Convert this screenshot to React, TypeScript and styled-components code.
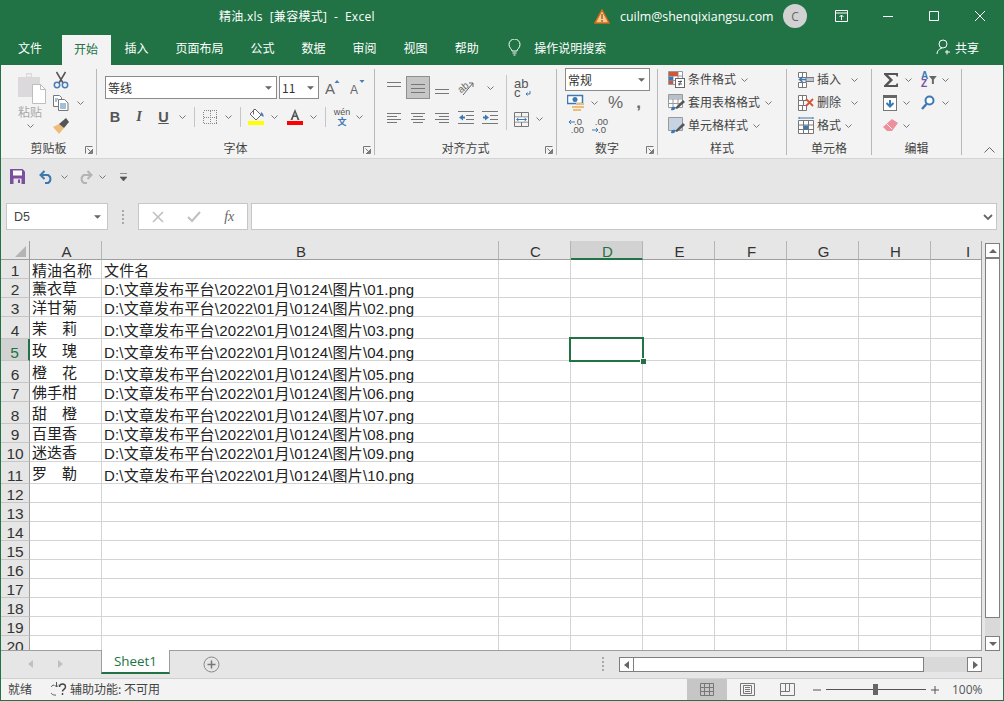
import React, { FunctionComponent, ReactNode } from 'react';
import styled, { createGlobalStyle } from 'styled-components';

const GREEN = '#217346';
const UI_FONT = '"Noto Sans CJK SC", "Noto Sans", sans-serif';
const LATIN_FONT = '"Open Sans", "Noto Sans CJK SC", sans-serif';
const SHEET_FONT = '"Liberation Sans", "Noto Sans CJK SC", sans-serif';

const GlobalStyle = createGlobalStyle`
  html, body { margin: 0; padding: 0; background: #e6e6e6; }
  * { box-sizing: border-box; }
`;

const Window = styled.div`
  width: 1004px;
  height: 701px;
  border: 1px solid ${GREEN};
  background: #e6e6e6;
  display: flex;
  flex-direction: column;
  overflow: hidden;
  font-family: ${UI_FONT};
  font-size: 12px;
  color: #444;
`;

/* title bar */
const TitleBar = styled.header`
  height: 32px;
  flex: none;
  background: ${GREEN};
  color: #fff;
  display: flex;
  align-items: center;
  padding: 0 0 2px 218px;
`;
const DocTitle = styled.div`
  width: 375px;
  font-family: ${LATIN_FONT};
  font-size: 12px;
  letter-spacing: 0.28px;
  white-space: pre;
`;
const Account = styled.div`
  font-family: ${LATIN_FONT};
  font-size: 12.4px;
  margin-left: 10px;
  width: 163px;
`;
const Avatar = styled.div`
  width: 24px;
  height: 24px;
  border-radius: 50%;
  background: #d2d2d2;
  color: #666;
  font-family: ${LATIN_FONT};
  font-size: 12px;
  display: flex;
  align-items: center;
  justify-content: center;
`;
const WinButton = styled.div<{ $w: number; $first?: boolean }>`
  width: ${(p) => p.$w}px;
  margin-left: ${(p) => (p.$first ? 12 : 0)}px;
  display: flex;
  justify-content: center;
`;

/* tabs */
const TabRow = styled.nav`
  height: 32px;
  flex: none;
  background: ${GREEN};
  display: flex;
  align-items: stretch;
  padding-left: 4px;
  color: #fff;
`;
const Tab = styled.div<{ $active?: boolean; $file?: boolean }>`
  padding: ${(p) => (p.$file ? '0 20px 4px 13px' : p.$active ? '0 13px 3px 12px' : '0 13.5px 4px')};
  display: flex;
  align-items: center;
  background: ${(p) => (p.$active ? '#f3f3f3' : 'transparent')};
  color: ${(p) => (p.$active ? GREEN : '#fff')};
  margin-top: ${(p) => (p.$active ? '2px' : '0')};
`;
const SearchHint = styled.div`
  display: flex;
  align-items: center;
  gap: 13px;
  margin-left: 16px;
  padding-bottom: 3px;
`;
const ShareBox = styled.div`
  margin-left: auto;
  margin-right: 24px;
  display: flex;
  align-items: center;
  gap: 3px;
  padding-bottom: 4px;
`;

/* ribbon */
const Ribbon = styled.section`
  height: 94px;
  flex: none;
  background: #f3f3f3;
  border-bottom: 1px solid #d4d4d4;
  display: flex;
  align-items: flex-start;
`;
const GroupBox = styled.div<{ $w: number }>`
  position: relative;
  width: ${(p) => p.$w}px;
  height: 86px;
  margin-top: 4px;
  flex: none;
  border-right: 1px solid #b8b8b8;
  display: flex;
  flex-direction: column;
`;
const GroupBody = styled.div<{ $left: number }>`
  height: 70px;
  padding-left: ${(p) => p.$left}px;
  display: flex;
  align-items: flex-start;
`;
const GroupLabel = styled.div`
  height: 16px;
  line-height: 18px;
  text-align: center;
  color: #444;
`;
const Launcher = styled.div`
  position: absolute;
  right: 3px;
  bottom: 1px;
  display: flex;
`;
const Group: FunctionComponent<{
  w: number;
  left: number;
  label: string;
  launcher?: boolean;
  children: ReactNode;
}> = ({ w, left, label, launcher, children }) => (
  <GroupBox $w={w}>
    <GroupBody $left={left}>{children}</GroupBody>
    <GroupLabel>{label}</GroupLabel>
    {launcher && (
      <Launcher>
        <LauncherIcon />
      </Launcher>
    )}
  </GroupBox>
);
const CollapseBtn = styled.div`
  margin-left: 22px;
  align-self: flex-end;
  margin-bottom: 2px;
`;

const Stack = styled.div<{ $top?: number; $left?: number; $w?: number }>`
  display: flex;
  flex-direction: column;
  margin-top: ${(p) => p.$top ?? 0}px;
  margin-left: ${(p) => p.$left ?? 0}px;
  ${(p) => (p.$w ? `width: ${p.$w}px;` : '')}
`;
const ToolRow = styled.div<{ $h?: number; $gap?: number; $top?: number; $left?: number }>`
  height: ${(p) => p.$h ?? 23}px;
  display: flex;
  align-items: center;
  gap: ${(p) => p.$gap ?? 0}px;
  margin-top: ${(p) => p.$top ?? 0}px;
  margin-left: ${(p) => p.$left ?? 0}px;
`;
const Slot = styled.div<{ $w: number; $active?: boolean }>`
  width: ${(p) => p.$w}px;
  height: 23px;
  flex: none;
  display: flex;
  align-items: center;
  justify-content: center;
  ${(p) => (p.$active ? 'background: #c6c6c6; border: 1px solid #8f8f8f;' : '')}
`;
const RuleSlot = styled.div`
  width: 8px;
  height: 55px;
  margin-top: 6px;
  flex: none;
  display: flex;
  justify-content: center;
`;
const VRule = styled.div<{ $h: number }>`
  width: 1px;
  height: ${(p) => p.$h}px;
  background: #c6c6c6;
`;
const Paste = styled.div`
  width: 34px;
  padding-top: 3px;
  display: flex;
  flex-direction: column;
  align-items: center;
  color: #a8a8a8;
  line-height: 14px;
  gap: 6px;
`;
const PasteText = styled.span`
  margin-bottom: -1px;
`;
const PastePic = styled.div`
  margin-bottom: -6px;
  display: flex;
`;
const ClipTools = styled(Stack)`
  margin-left: 5px;
  margin-top: -1px;
`;
const Combo = styled.div<{ $w: number; $h?: number }>`
  width: ${(p) => p.$w}px;
  height: ${(p) => p.$h ?? 23}px;
  background: #fff;
  border: 1px solid #8a8a8a;
  display: flex;
  align-items: center;
  justify-content: space-between;
  padding: 0 4px 0 2px;
  color: #333;
`;
const StyleText = styled.span`
  color: #444;
  padding-bottom: 2px;
`;
const Pct = styled.span<{ $bold?: boolean }>`
  font-family: ${SHEET_FONT};
  font-size: 17px;
  font-weight: ${(p) => (p.$bold ? 'bold' : 'normal')};
  line-height: 20px;
  color: #666;
`;
const Chev = styled.svg<{ $ml?: number }>`
  flex: none;
  margin-left: ${(p) => p.$ml ?? 0}px;
`;
const Chevron: FunctionComponent<{ ml?: number }> = ({ ml }) => (
  <Chev $ml={ml} width="7" height="4" viewBox="0 0 7 4">
    <path d="M.5.5l3 3 3-3" fill="none" stroke="#777" />
  </Chev>
);
const CaretDown = () => (
  <svg width="7" height="4" viewBox="0 0 8 4">
    <path d="M0 0h8L4 4z" fill="#666" />
  </svg>
);

/* quick access */
const Qat = styled.div`
  height: 36px;
  flex: none;
  display: flex;
  align-items: center;
  padding: 0 0 1px 9px;
`;

/* formula bar */
const FormulaBar = styled.div`
  height: 46px;
  flex: none;
  display: flex;
  padding: 8px 6px 11px 5px;
`;
const NameBox = styled.div`
  width: 102px;
  background: #fff;
  border: 1px solid #c6c6c6;
  display: flex;
  align-items: center;
  justify-content: space-between;
  padding: 0 6px 0 7px;
  font-family: ${SHEET_FONT};
  font-size: 12.5px;
`;
const BarDots = styled.div`
  width: 30px;
  display: flex;
  flex-direction: column;
  align-items: center;
  justify-content: center;
  gap: 2px;
`;
const Dot = styled.i`
  width: 2px;
  height: 2px;
  background: #a8a8a8;
`;
const FxBox = styled.div`
  width: 110px;
  background: #fff;
  border: 1px solid #c6c6c6;
  display: flex;
  align-items: center;
  justify-content: space-around;
  padding: 0 1px;
`;
const FxLabel = styled.span`
  font-family: "Liberation Serif", serif;
  font-style: italic;
  font-size: 14px;
  color: #666;
`;
const FormulaInput = styled.div`
  flex: 1;
  margin-left: 3px;
  background: #fff;
  border: 1px solid #c6c6c6;
  display: flex;
  align-items: center;
  justify-content: flex-end;
  padding-right: 3px;
`;

/* sheet */
const SheetArea = styled.div`
  height: 410px;
  flex: none;
  display: flex;
`;
const Grid = styled.div`
  width: 981px;
  flex: none;
  overflow: hidden;
  border-bottom: 1px solid #9e9e9e;
  border-right: 1px solid #9e9e9e;
  background: #fff;
  display: grid;
  grid-template-columns: 29px 72px 397px 72px 72px 72px 72px 72px 72px 51px;
  grid-auto-rows: min-content;
  font-family: ${SHEET_FONT};
  font-size: 15px;
  color: #222;
`;
const Corner = styled.div`
  height: 19px;
  background: #e6e6e6;
  border-right: 1px solid #9e9e9e;
  border-bottom: 1px solid #9e9e9e;
  display: flex;
  align-items: flex-end;
  justify-content: flex-end;
  padding: 0 3px 2px 0;
`;
const ColHead = styled.div<{ $selected?: boolean; $last?: boolean }>`
  height: 19px;
  background: ${(p) => (p.$selected ? '#d2d2d2' : '#e6e6e6')};
  border-right: ${(p) => (p.$last ? 'none' : '1px solid #b4b4b4')};
  border-bottom: ${(p) => (p.$selected ? `2px solid ${GREEN}` : '1px solid #9e9e9e')};
  color: ${(p) => (p.$selected ? GREEN : '#333')};
  padding-left: ${(p) => (p.$last ? 23 : 2)}px;
  text-align: center;
  line-height: 21px;
`;
const RowHead = styled.div<{ $h: number; $selected?: boolean }>`
  height: ${(p) => p.$h}px;
  background: ${(p) => (p.$selected ? '#d2d2d2' : '#e6e6e6')};
  border-right: ${(p) => (p.$selected ? `2px solid ${GREEN}` : '1px solid #9e9e9e')};
  border-bottom: 1px solid #c6c6c6;
  color: ${(p) => (p.$selected ? GREEN : '#333')};
  font-size: 15.5px;
  line-height: 15px;
  text-align: center;
  display: flex;
  align-items: flex-end;
  justify-content: center;
`;
const Cell = styled.div<{ $h: number; $last?: boolean; $lift?: number; $path?: boolean }>`
  position: relative;
  height: ${(p) => p.$h}px;
  border-right: ${(p) => (p.$last ? 'none' : '1px solid #d4d4d4')};
  border-bottom: 1px solid #d4d4d4;
  padding: 0 2px ${(p) => p.$lift ?? 0}px 2px;
  line-height: 15px;
  letter-spacing: ${(p) => (p.$path ? '0.18px' : '0')};
  white-space: pre;
  display: flex;
  align-items: flex-end;
`;
const Selection = styled.div`
  position: absolute;
  left: -2px;
  top: -2px;
  right: -2px;
  bottom: -2px;
  border: 2px solid ${GREEN};
  z-index: 2;
`;
const FillHandle = styled.div`
  position: absolute;
  right: -4px;
  bottom: -4px;
  width: 5px;
  height: 5px;
  background: ${GREEN};
  border: 1px solid #fff;
  border-width: 1px 0 0 1px;
  box-sizing: content-box;
`;

/* scrollbars */
const VScroll = styled.div`
  width: 15px;
  margin: 2px 0 0 3px;
  display: flex;
  flex-direction: column;
`;
const ScrollBtn = styled.div<{ $w?: number; $h?: number }>`
  width: ${(p) => p.$w ?? 15}px;
  height: ${(p) => p.$h ?? 15}px;
  flex: none;
  background: #fff;
  border: 1px solid #7f7f7f;
  display: flex;
  align-items: center;
  justify-content: center;
`;
const VThumb = styled.div`
  height: 360px;
  flex: none;
  background: #fff;
  border: 1px solid #7f7f7f;
`;
const VTrack = styled.div`
  flex: 1;
  background: #d9d9d9;
`;

/* sheet tabs */
const TabBar = styled.div`
  height: 27px;
  flex: none;
  display: flex;
  align-items: flex-start;
`;
const TabNav = styled.div`
  width: 100px;
  height: 25px;
  padding-left: 26px;
  display: flex;
  align-items: center;
  gap: 21px;
`;
const SheetTab = styled.div`
  width: 69px;
  height: 24px;
  margin-top: -1px;
  background: #fff;
  border: 1px solid #9e9e9e;
  border-top: none;
  border-bottom: 2px solid ${GREEN};
  color: ${GREEN};
  font-family: ${LATIN_FONT};
  font-size: 13.4px;
  text-align: center;
  line-height: 23px;
`;
const AddSheet = styled.div`
  margin-left: 33px;
  margin-top: 5px;
`;
const SplitDots = styled(BarDots)`
  margin-left: 377px;
  width: 12px;
  height: 25px;
`;
const HScroll = styled.div`
  margin: 6px 0 0 10px;
  width: 363px;
  display: flex;
`;
const HThumb = styled.div`
  width: 291px;
  height: 15px;
  background: #fff;
  border: 1px solid #7f7f7f;
  margin-left: -1px;
`;
const HTrack = styled.div`
  flex: 1;
  height: 15px;
  background: #d9d9d9;
`;

/* status bar */
const StatusBar = styled.footer`
  height: 22px;
  flex: none;
  background: #f3f3f3;
  border-top: 1px solid #d0d0d0;
  display: flex;
  align-items: stretch;
  padding-left: 7px;
  color: #444;
`;
const StatusText = styled.div`
  display: flex;
  align-items: center;
  gap: 3px;
  padding-bottom: 2px;
`;
const Ready = styled(StatusText)`
  width: 43px;
`;
const ViewBtn = styled.div<{ $active?: boolean; $w: number }>`
  width: ${(p) => p.$w}px;
  flex: none;
  background: ${(p) => (p.$active ? '#c6c6c6' : 'transparent')};
  display: flex;
  align-items: center;
  justify-content: center;
`;
const ViewGroup = styled.div`
  margin-left: auto;
  display: flex;
`;
const ZoomBox = styled.div`
  display: flex;
  align-items: center;
  margin-left: 6px;
  color: #555;
`;
const Slider = styled.div`
  position: relative;
  width: 100px;
  height: 1px;
  margin: 0 5px;
  background: #555;
`;
const SliderThumb = styled.div`
  position: absolute;
  left: 47px;
  top: -5px;
  width: 5px;
  height: 11px;
  background: #666;
`;
const ZoomPct = styled.div`
  font-family: ${LATIN_FONT};
  font-size: 12px;
  margin-left: 13px;
  padding-bottom: 1px;
  width: 51px;
`;

/* icons */
const LauncherIcon = () => (
  <svg width="8" height="8" viewBox="0 0 8 8">
    <path d="M.5 7.500v-7h7M7.500 3v4.500H3M2.500 2.500l4 4M6.500 4v2.500H4" fill="none" stroke="#777" />
  </svg>
);
const PasteIcon = () => (
  <svg width="32" height="33" viewBox="0 0 32 33">
    <path d="M4 5h8V1h6v4h8v20H4z" fill="#dcd9dc" />
    <rect x="13" y="2.500" width="4" height="2" fill="#f3f3f3" />
    <path d="M18.500 12.500h8l5 5v14h-13z" fill="#fff" stroke="#bdbdbd" />
    <path d="M26.500 12.500v5h5" fill="none" stroke="#bdbdbd" />
  </svg>
);
const CutIcon = () => (
  <svg width="16" height="18" viewBox="0 0 16 18">
    <path d="M3.500 1l6.500 11M12.500 1L6 12" stroke="#555" strokeWidth="1.500" fill="none" />
    <circle cx="4" cy="14" r="2.700" fill="none" stroke="#4a7db5" strokeWidth="1.500" />
    <circle cx="12" cy="14" r="2.700" fill="none" stroke="#4a7db5" strokeWidth="1.500" />
  </svg>
);
const CopyIcon = () => (
  <svg width="16" height="16" viewBox="0 0 16 16">
    <path d="M.5.500h6l2 2v9h-8z" fill="#fff" stroke="#777" />
    <path d="M5.500 4.500h6l3.500 3.500v7.500H5.500z" fill="#fff" stroke="#777" />
    <path d="M7 9h6M7 11h6M7 13h6M2 4h3M2 6h2" stroke="#4a7db5" />
  </svg>
);
const BrushIcon = () => (
  <svg width="16" height="16" viewBox="0 0 16 16">
    <path d="M0 9l6 7 5-6-5-4z" fill="#eebc7a" />
    <path d="M6 6l5 4 5-6-3-4z" fill="#555" />
  </svg>
);
const FontGrow = ({ up }: { up: boolean }) => (
  <svg width="16" height="18" viewBox="0 0 16 18">
    <text x="0" y="15" fontFamily="Liberation Sans" fontSize={up ? 15 : 12} fill="#666">A</text>
    <path d={up ? 'M9.500 4l2.500-3 2.500 3z' : 'M9.500 1l2.500 3 2.500-3z'} fill="#4a7db5" />
  </svg>
);
const Glyph = styled.span<{ $i?: boolean; $u?: boolean }>`
  font-family: ${(p) => (p.$i ? '"Liberation Serif", serif' : SHEET_FONT)};
  font-size: 14.5px;
  font-weight: bold;
  font-style: ${(p) => (p.$i ? 'italic' : 'normal')};
  text-decoration: ${(p) => (p.$u ? 'underline' : 'none')};
  color: #555;
`;
const BorderIcon = () => (
  <svg width="14" height="14" viewBox="0 0 14 14" shapeRendering="crispEdges">
    <path d="M.5.500h13v13H.5zM7 .5v13M.5 7h13" fill="none" stroke="#888" strokeDasharray="1 1" />
  </svg>
);
const FillColorIcon = () => (
  <svg width="17" height="17" viewBox="0 0 17 17">
    <path d="M7 1l6 6-5 5-6-6z" fill="#fff" stroke="#666" />
    <path d="M5.500 1.500v5" stroke="#666" />
    <path d="M13 4c2 1 3 3 2.500 5-1-.5-2-1.500-3-2z" fill="#4a7db5" />
    <rect y="13" width="16" height="4" fill="#ffff00" />
  </svg>
);
const FontColorIcon = () => (
  <svg width="16" height="17" viewBox="0 0 16 17">
    <path d="M8 1L3.500 12h2l1-3h3l1 3h2zM7.200 7.500L8 4.500l.8 3z" fill="#555" fillRule="evenodd" />
    <rect y="13" width="16" height="4" fill="#ff0000" />
  </svg>
);
const WenLabel = styled.div`
  display: flex;
  flex-direction: column;
  align-items: center;
  font-size: 9px;
  line-height: 9px;
  font-family: ${SHEET_FONT};
  color: #555;
`;
const WenZi = styled.span`
  color: #3b78b4;
  font-family: ${UI_FONT};
  font-weight: bold;
`;
const Lines = ({ rows, w = 14 }: { rows: number[][]; w?: number }) => (
  <svg width={w} height="16" viewBox={`0 0 ${w} 16`}>
    {rows.map(([y, a, b]) => (
      <path key={y} d={`M${a} ${y}.5H${b}`} stroke="#777" />
    ))}
  </svg>
);
const OrientIcon = () => (
  <svg width="20" height="20" viewBox="0 0 20 20">
    <text x="2" y="13" fontFamily="Liberation Sans" fontSize="10" fill="#666" transform="rotate(-40 7 10)">ab</text>
    <path d="M7 17L17 5M13 5h4v4" fill="none" stroke="#666" />
  </svg>
);
const IndentIcon = ({ out }: { out: boolean }) => (
  <svg width="17" height="14" viewBox="0 0 17 14">
    <path d="M0 .5h16M8 4.500h8M8 8.500h8M0 12.500h16" stroke="#777" />
    <path d={out ? 'M1 6.500l4-3v2h2v2H5v2z' : 'M7 6.500l-4-3v2H1v2h2v2z'} fill="#3b78b4" />
  </svg>
);
const WrapBox = styled.div`
  position: relative;
  width: 17px;
  font-family: ${SHEET_FONT};
  font-size: 13px;
  line-height: 9px;
  color: #555;
  white-space: pre;
`;
const WrapArrow = styled.svg`
  position: absolute;
  right: 0;
  bottom: 0;
`;
const MergeIcon = () => (
  <svg width="15" height="15" viewBox="0 0 15 15">
    <path d="M.5.500h14v14H.5zM.5 5h14M.5 10h14M7.500 .5V5M7.500 10v4.500" fill="none" stroke="#777" />
    <rect x="1" y="5.500" width="13" height="4" fill="#fff" />
    <path d="M3 7.500h9M4.500 6l-2 1.500L4.500 9M10.500 6l2 1.500-2 1.500" fill="none" stroke="#3b78b4" />
  </svg>
);
const CurrencyIcon = () => (
  <svg width="18" height="18" viewBox="0 0 18 18">
    <rect x=".5" y="1.500" width="15" height="8" fill="#fff" stroke="#3b78b4" strokeWidth="1.500" />
    <circle cx="8" cy="5.500" r="2.500" fill="#3b78b4" />
    <path d="M5 12h7v2H5zM9 9h8v2H9zM9 12h8v2H9zM6 15h8v2H6z" fill="#eebc7a" />
  </svg>
);
const DecimalText = styled.span<{ $right: number }>`
  display: block;
  text-align: right;
  padding-right: ${(p) => p.$right}px;
  font-family: ${SHEET_FONT};
  font-size: 9.5px;
  line-height: 8px;
  color: #555;
`;
const DecimalBox = styled.div`
  position: relative;
  width: 16px;
  height: 16px;
`;
const DecimalArrow = styled.svg<{ $low: boolean }>`
  position: absolute;
  left: 0;
  top: ${(p) => (p.$low ? 9 : 1)}px;
`;
const DecimalIcon = ({ more }: { more: boolean }) => (
  <DecimalBox>
    <DecimalText $right={more ? 0 : 2}>{more ? '.00' : '.0'}</DecimalText>
    <DecimalText $right={more ? 2 : 0}>{more ? '.0' : '.00'}</DecimalText>
    <DecimalArrow $low={more} width="7" height="6" viewBox="0 0 7 6">
      <path d={more ? 'M0 3h6M4 1l2 2-2 2' : 'M7 3H1M3 1L1 3l2 2'} fill="none" stroke="#3b78b4" />
    </DecimalArrow>
  </DecimalBox>
);
const TableBase = ({ accent }: { accent: ReactNode }) => (
  <svg width="17" height="17" viewBox="0 0 17 17">
    <path d="M.5.500h14v13H.5zM5 .5v13M10 .5v13M.5 5h14M.5 9.500h14" fill="#fff" stroke="#999" />
    {accent}
  </svg>
);
const CondIcon = () => (
  <TableBase
    accent={
      <>
        <rect x="1" y="1" width="9" height="4" fill="#d2573a" />
        <rect x="1" y="5.500" width="4" height="4" fill="#3b78b4" />
        <rect x="1" y="10" width="4" height="3" fill="#d2573a" />
        <rect x="7.500" y="7.500" width="9" height="9" fill="#fff" stroke="#666" />
        <path d="M10 10.500h4M10 13h4M13 9.500l-2 5" stroke="#555" fill="none" />
      </>
    }
  />
);
const TableFmtIcon = () => (
  <TableBase
    accent={
      <>
        <rect x="1" y="1" width="13" height="4" fill="#b8c0cc" />
        <path d="M7 14l8-8 2 2-8 7z" fill="#555" />
        <path d="M3 16c0-3 2-4 4-3 1 2-1 4-4 3z" fill="#3b78b4" />
      </>
    }
  />
);
const CellStyleIcon = () => (
  <TableBase
    accent={
      <>
        <rect x="1" y="1" width="13" height="12" fill="#c7d3e3" />
        <path d="M7 14l8-8 2 2-8 7z" fill="#555" />
        <path d="M3 16c0-3 2-4 4-3 1 2-1 4-4 3z" fill="#3b78b4" />
      </>
    }
  />
);
const InsertIcon = () => (
  <svg width="16" height="16" viewBox="0 0 16 16">
    <path d="M.5.500h8v5h-8zM.5 10.500h8v5h-8zM4.500 .5v5M4.500 10.500v5" fill="#fff" stroke="#777" />
    <rect x="8" y="5.500" width="8" height="4" fill="#b8c6d8" stroke="#777" />
    <path d="M8 7.500H2M4.500 5l-3 2.500 3 2.500" fill="none" stroke="#3b78b4" strokeWidth="1.500" />
  </svg>
);
const DeleteIcon = () => (
  <svg width="16" height="16" viewBox="0 0 16 16">
    <path d="M.5.500h8v5h-8zM.5 10.500h8v5h-8zM4.500 .5v5M4.500 10.500v5M.5 5.500h5v5h-5z" fill="#fff" stroke="#777" />
    <path d="M8 4l7 7M15 4l-7 7" stroke="#d2573a" strokeWidth="1.800" />
  </svg>
);
const FormatIcon = () => (
  <svg width="16" height="17" viewBox="0 0 16 17">
    <path d="M.5 3.500h15v13H.5zM5.500 3.500v13M10.500 3.500v13M.5 8h15M.5 12.500h15" fill="#fff" stroke="#777" />
    <rect x="6" y="8.500" width="4" height="4" fill="#3b78b4" />
    <path d="M1 1h14M1 0v2M15 0v2" stroke="#3b78b4" />
  </svg>
);
const SigmaIcon = () => (
  <svg width="16" height="16" viewBox="0 0 16 16">
    <path d="M1 1h14v3.500h-1.500L13 3H5l5 5-5 5h8l.5-1.500H15V15H1v-1.500L6.500 8 1 2.500z" fill="#555" />
  </svg>
);
const SortLetters = styled.div`
  display: flex;
  flex-direction: column;
  font-family: ${SHEET_FONT};
  font-size: 10px;
  font-weight: bold;
  line-height: 8px;
  color: #3b78b4;
`;
const SortZ = styled.span`
  color: #7b4fa6;
`;
const SortBox = styled.div`
  display: flex;
  align-items: center;
  gap: 1px;
  width: 16px;
`;
const SortIcon = () => (
  <SortBox>
    <SortLetters>A<SortZ>Z</SortZ></SortLetters>
    <svg width="8" height="8" viewBox="0 0 8 8">
      <path d="M0 0h8L5 3.500V8H3V3.500z" fill="#666" />
    </svg>
  </SortBox>
);
const FillDownIcon = () => (
  <svg width="14" height="16" viewBox="0 0 14 16">
    <rect x=".5" y=".5" width="13" height="15" fill="#fff" stroke="#777" />
    <rect width="14" height="3" fill="#666" />
    <path d="M7 5v6M3.500 8L7 11.500 10.500 8" fill="none" stroke="#3b78b4" strokeWidth="2" />
  </svg>
);
const FindIcon = () => (
  <svg width="14" height="15" viewBox="0 0 14 15">
    <circle cx="8.500" cy="5.500" r="4" fill="#fff" stroke="#3b78b4" strokeWidth="2" />
    <path d="M1 14l4.500-5" stroke="#3b78b4" strokeWidth="2.400" />
  </svg>
);
const EraserIcon = () => (
  <svg width="15" height="13" viewBox="0 0 15 13">
    <path d="M9 0l6 4-6 8H4L0 8z" fill="#ee8f9c" />
    <path d="M4 5l5 5" stroke="#f3f3f3" />
  </svg>
);
const SaveIcon = () => (
  <svg width="15" height="15" viewBox="0 0 15 15">
    <path d="M0 0h12.500L15 2.500V15H0z" fill="#7a4f9e" />
    <rect x="3" y="1.500" width="9" height="5" fill="#fff" />
    <rect x="3.500" y="9.500" width="8" height="5.500" fill="#e6e6e6" />
    <rect x="8" y="10.500" width="2" height="3.500" fill="#7a4f9e" />
  </svg>
);
const ArrowSvg = styled.svg<{ $flip?: boolean }>`
  transform: ${(p) => (p.$flip ? 'scaleX(-1)' : 'none')};
`;
const ArrowIcon = ({ color, flip }: { color: string; flip?: boolean }) => (
  <ArrowSvg $flip={flip} width="15" height="14" viewBox="0 0 15 14">
    <path d="M5.500 1L1.500 5l4 4M2 5h7a4.500 4.500 0 0 1 0 8H6" fill="none" stroke={color} strokeWidth="2" />
  </ArrowSvg>
);
const QatSlot = styled.div<{ $w: number }>`
  width: ${(p) => p.$w}px;
  display: flex;
  justify-content: center;
  align-items: center;
`;
const Customize = () => (
  <svg width="7" height="8" viewBox="0 0 7 8">
    <path d="M0 .5h7M0 4h7L3.500 8z" fill="#555" stroke="#555" strokeWidth=".6" />
  </svg>
);
const Warning = () => (
  <svg width="16" height="15" viewBox="0 0 16 15">
    <path d="M8 1l7 13H1z" fill="#f7c98b" stroke="#d9691a" strokeWidth="1.500" />
    <path d="M8 5v5M8 11v2" stroke="#6b3a10" />
  </svg>
);
const Bulb = () => (
  <svg width="13" height="17" viewBox="0 0 13 17">
    <path d="M4 12c0-2-3-3-3-6.500a5.500 5.500 0 0 1 11 0C12 9 9 10 9 12zM4.500 14h4M5.500 16h2" fill="none" stroke="#fff" />
  </svg>
);
const Person = () => (
  <svg width="16" height="16" viewBox="0 0 16 16">
    <circle cx="7" cy="5" r="4" fill="none" stroke="#fff" />
    <path d="M1 15c0-3 2-5 5-6M11 11v4.500M9 13h5" fill="none" stroke="#fff" />
  </svg>
);
const WindowIcon = ({ d }: { d: string }) => (
  <svg width="14" height="14" viewBox="0 0 14 14">
    <path d={d} fill="none" stroke="#fff" />
  </svg>
);
const AccessIcon = () => (
  <svg width="16" height="15" viewBox="0 0 16 15">
    <path d="M5.500 1v5M3.500 4l2 2 2-2M3 4a5 5 0 1 0 2 10" fill="none" stroke="#555" strokeDasharray="2 0" />
    <path d="M8.500 6a3 3 0 0 1 6 0c0 2.200-3 2.500-3 4.500M11.500 12v2" fill="none" stroke="#444" strokeWidth="1.400" />
  </svg>
);
const ViewIconNormal = () => (
  <svg width="14" height="13" viewBox="0 0 14 13">
    <path d="M.5.500h13v12H.5zM.5 4.500h13M.5 8.500h13M4.500 .5v12M9.500 .5v12" fill="none" stroke="#777" />
  </svg>
);
const ViewIconPage = () => (
  <svg width="15" height="13" viewBox="0 0 15 13">
    <path d="M.5.500h14v12H.5zM3.500 2.500h8v8h-8zM5 4.500h5M5 6.500h5M5 8.500h5" fill="none" stroke="#777" />
  </svg>
);
const ViewIconBreak = () => (
  <svg width="15" height="13" viewBox="0 0 15 13">
    <path d="M.5.500h14v12H.5zM.5 8.500h9v-8M5.500 .5v8" fill="none" stroke="#777" />
  </svg>
);
const AddIcon = () => (
  <svg width="17" height="17" viewBox="0 0 17 17">
    <circle cx="8.500" cy="8.500" r="7.500" fill="none" stroke="#8a8a8a" />
    <path d="M8.500 4.500v8M4.500 8.500h8" stroke="#777" strokeWidth="1.500" />
  </svg>
);
const Tri = ({ d, color = '#666' }: { d: string; color?: string }) => (
  <svg width="8" height="8" viewBox="0 0 8 8">
    <path d={d} fill={color} />
  </svg>
);

/* data */
const COLUMNS = ['A', 'B', 'C', 'D', 'E', 'F', 'G', 'H', 'I'];
const ROW_HEIGHTS = [19, 19, 19, 22, 22, 22, 19, 22, 19, 19, 22, 19, 19, 19, 19, 19, 19, 19, 19, 19];
const NAMES = ['精油名称', '薰衣草', '洋甘菊', '茉　莉', '玫　瑰', '橙　花', '佛手柑', '甜　橙', '百里香', '迷迭香', '罗　勒'];
const fileName = (row: number) =>
  row === 1 ? '文件名' : `D:\\文章发布平台\\2022\\01月\\0124\\图片\\${String(row - 1).padStart(2, '0')}.png`;
const nameLift = (row: number, h: number) => (row === 1 ? 0 : h === 22 ? 2 : 1);

const Sheet = () => (
  <Grid>
    <Corner>
      <svg width="11" height="11" viewBox="0 0 11 11">
        <path d="M11 0v11H0z" fill="#b4b4b4" />
      </svg>
    </Corner>
    {COLUMNS.map((c, i) => (
      <ColHead key={c} $selected={c === 'D'} $last={i === COLUMNS.length - 1}>
        {c}
      </ColHead>
    ))}
    {ROW_HEIGHTS.map((h, r) => {
      const row = r + 1;
      return (
        <React.Fragment key={row}>
          <RowHead $h={h} $selected={row === 5}>{row}</RowHead>
          {COLUMNS.map((c, i) => (
            <Cell
              key={c}
              $h={h}
              $last={i === COLUMNS.length - 1}
              $lift={c === 'A' ? nameLift(row, h) : 0}
              $path={c === 'B'}
            >
              {c === 'A' && NAMES[r]}
              {c === 'B' && row <= 11 && fileName(row)}
              {c === 'D' && row === 5 && (
                <Selection>
                  <FillHandle />
                </Selection>
              )}
            </Cell>
          ))}
        </React.Fragment>
      );
    })}
  </Grid>
);

const App: FunctionComponent = () => (
  <>
    <GlobalStyle />
    <Window>
      <TitleBar>
        <DocTitle>{'精油.xls  [兼容模式]  -  Excel'}</DocTitle>
        <Warning />
        <Account>cuilm@shenqixiangsu.com</Account>
        <Avatar>C</Avatar>
        <WinButton $w={46} $first>
          <WindowIcon d="M.5 1.500h12v11H.5zM.5 4h12M6.500 11V6M4.500 8l2-2 2 2" />
        </WinButton>
        <WinButton $w={46}>
          <WindowIcon d="M2 7.500h10" />
        </WinButton>
        <WinButton $w={46}>
          <WindowIcon d="M2.500 2.500h9v9h-9z" />
        </WinButton>
        <WinButton $w={46}>
          <WindowIcon d="M2 2l10 10M12 2L2 12" />
        </WinButton>
      </TitleBar>

      <TabRow>
        <Tab $file>文件</Tab>
        <Tab $active>开始</Tab>
        <Tab>插入</Tab>
        <Tab>页面布局</Tab>
        <Tab>公式</Tab>
        <Tab>数据</Tab>
        <Tab>审阅</Tab>
        <Tab>视图</Tab>
        <Tab>帮助</Tab>
        <SearchHint>
          <Bulb />
          操作说明搜索
        </SearchHint>
        <ShareBox>
          <Person />
          共享
        </ShareBox>
      </TabRow>

      <Ribbon>
        <Group w={96} left={12} label="剪贴板" launcher>
          <Paste>
            <PastePic><PasteIcon /></PastePic>
            <PasteText>粘贴</PasteText>
            <Chevron />
          </Paste>
          <ClipTools>
            <ToolRow><Slot $w={18}><CutIcon /></Slot></ToolRow>
            <ToolRow>
              <Slot $w={18}><CopyIcon /></Slot>
              <Chevron ml={7} />
            </ToolRow>
            <ToolRow><Slot $w={18}><BrushIcon /></Slot></ToolRow>
          </ClipTools>
        </Group>

        <Group w={278} left={8} label="字体" launcher>
          <Stack $top={7}>
            <ToolRow $gap={2}>
              <Combo $w={172}>
                等线
                <CaretDown />
              </Combo>
              <Combo $w={40}>
                11
                <CaretDown />
              </Combo>
              <Slot $w={24}><FontGrow up /></Slot>
              <Slot $w={22}><FontGrow up={false} /></Slot>
            </ToolRow>
            <ToolRow $top={6} $left={-2}>
              <Slot $w={24}><Glyph>B</Glyph></Slot>
              <Slot $w={24}><Glyph $i>I</Glyph></Slot>
              <Slot $w={25}><Glyph $u>U</Glyph></Slot>
              <Slot $w={12}><Chevron /></Slot>
              <Slot $w={12}><VRule $h={20} /></Slot>
              <Slot $w={20}><BorderIcon /></Slot>
              <Slot $w={16}><Chevron /></Slot>
              <Slot $w={8}><VRule $h={20} /></Slot>
              <Slot $w={24}><FillColorIcon /></Slot>
              <Slot $w={12}><Chevron /></Slot>
              <Slot $w={30}><FontColorIcon /></Slot>
              <Slot $w={7}><Chevron /></Slot>
              <Slot $w={16}><VRule $h={20} /></Slot>
              <Slot $w={18}>
                <WenLabel>wén<WenZi>文</WenZi></WenLabel>
              </Slot>
              <Slot $w={16}><Chevron /></Slot>
            </ToolRow>
          </Stack>
        </Group>

        <Group w={182} left={7} label="对齐方式" launcher>
          <Stack $top={7}>
            <ToolRow>
              <Slot $w={24}><Lines rows={[[2, 0, 14], [6, 0, 14]]} /></Slot>
              <Slot $w={24} $active><Lines rows={[[4, 0, 14], [8, 0, 14], [12, 0, 14]]} /></Slot>
              <Slot $w={24}><Lines rows={[[9, 0, 14], [13, 0, 14]]} /></Slot>
              <Slot $w={24}><OrientIcon /></Slot>
              <Slot $w={24}><Chevron /></Slot>
            </ToolRow>
            <ToolRow $top={7}>
              <Slot $w={24}><Lines rows={[[3, 0, 14], [6, 0, 10], [9, 0, 14], [12, 0, 10]]} /></Slot>
              <Slot $w={24}><Lines rows={[[3, 0, 14], [6, 2, 12], [9, 0, 14], [12, 2, 12]]} /></Slot>
              <Slot $w={24}><Lines rows={[[3, 0, 14], [6, 4, 14], [9, 0, 14], [12, 4, 14]]} /></Slot>
              <Slot $w={24}><IndentIcon out /></Slot>
              <Slot $w={24}><IndentIcon out={false} /></Slot>
            </ToolRow>
          </Stack>
          <RuleSlot><VRule $h={55} /></RuleSlot>
          <Stack $top={6} $left={4}>
            <ToolRow $h={26}>
              <WrapBox>
                {'ab\nc'}
                <WrapArrow width="6" height="6" viewBox="0 0 6 6">
                  <path d="M5 0v3H1M2.500 1.500L1 3l1.500 1.500" fill="none" stroke="#3b78b4" />
                </WrapArrow>
              </WrapBox>
            </ToolRow>
            <ToolRow $h={30} $top={3}>
              <MergeIcon />
              <Chevron ml={7} />
            </ToolRow>
          </Stack>
        </Group>

        <Group w={101} left={8} label="数字" launcher>
          <Stack $top={-1}>
            <Combo $w={85}>
              常规
              <CaretDown />
            </Combo>
            <ToolRow>
              <Slot $w={22}><CurrencyIcon /></Slot>
              <Slot $w={14}><Chevron /></Slot>
              <Slot $w={29}><Pct>%</Pct></Slot>
              <Slot $w={17}><Pct $bold>,</Pct></Slot>
            </ToolRow>
            <ToolRow>
              <Slot $w={22}><DecimalIcon more={false} /></Slot>
              <Slot $w={26}><DecimalIcon more /></Slot>
            </ToolRow>
          </Stack>
        </Group>

        <Group w={129} left={10} label="样式">
          <Stack $top={-1}>
            <ToolRow $gap={3}><CondIcon /><StyleText>条件格式</StyleText><Chevron ml={2} /></ToolRow>
            <ToolRow $gap={3}><TableFmtIcon /><StyleText>套用表格格式</StyleText><Chevron ml={2} /></ToolRow>
            <ToolRow $gap={3}><CellStyleIcon /><StyleText>单元格样式</StyleText><Chevron ml={2} /></ToolRow>
          </Stack>
        </Group>

        <Group w={85} left={11} label="单元格">
          <Stack $top={-1}>
            <ToolRow $gap={3}><InsertIcon /><StyleText>插入</StyleText><Chevron ml={7} /></ToolRow>
            <ToolRow $gap={3}><DeleteIcon /><StyleText>删除</StyleText><Chevron ml={7} /></ToolRow>
            <ToolRow $gap={3}><FormatIcon /><StyleText>格式</StyleText><Chevron ml={1} /></ToolRow>
          </Stack>
        </Group>

        <Group w={90} left={11} label="编辑">
          <Stack $top={-1} $w={38}>
            <ToolRow><SigmaIcon /><Chevron ml={6} /></ToolRow>
            <ToolRow><FillDownIcon /><Chevron ml={6} /></ToolRow>
            <ToolRow><EraserIcon /><Chevron ml={5} /></ToolRow>
          </Stack>
          <Stack $top={-1}>
            <ToolRow><SortIcon /><Chevron ml={5} /></ToolRow>
            <ToolRow><FindIcon /><Chevron ml={7} /></ToolRow>
          </Stack>
        </Group>

        <CollapseBtn>
          <svg width="11" height="6" viewBox="0 0 11 6">
            <path d="M.5 5.500l5-5 5 5" fill="none" stroke="#666" />
          </svg>
        </CollapseBtn>
      </Ribbon>

      <Qat>
        <QatSlot $w={15}><SaveIcon /></QatSlot>
        <QatSlot $w={14} />
        <QatSlot $w={15}><ArrowIcon color="#3b78b4" /></QatSlot>
        <QatSlot $w={20}><Chevron /></QatSlot>
        <QatSlot $w={4} />
        <QatSlot $w={15}><ArrowIcon color="#b4b4b4" flip /></QatSlot>
        <QatSlot $w={18}><Chevron /></QatSlot>
        <QatSlot $w={24}><Customize /></QatSlot>
      </Qat>

      <FormulaBar>
        <NameBox>
          D5
          <CaretDown />
        </NameBox>
        <BarDots>
          <Dot />
          <Dot />
          <Dot />
          <Dot />
        </BarDots>
        <FxBox>
          <svg width="12" height="12" viewBox="0 0 12 12">
            <path d="M1 1l10 10M11 1L1 11" stroke="#c0c0c0" strokeWidth="1.600" />
          </svg>
          <svg width="14" height="12" viewBox="0 0 14 12">
            <path d="M1 6l4 4 8-9" fill="none" stroke="#c0c0c0" strokeWidth="2" />
          </svg>
          <FxLabel>fx</FxLabel>
        </FxBox>
        <FormulaInput>
          <svg width="10" height="6" viewBox="0 0 10 6">
            <path d="M1 1l4 4 4-4" fill="none" stroke="#666" strokeWidth="1.800" />
          </svg>
        </FormulaInput>
      </FormulaBar>

      <SheetArea>
        <Sheet />
        <VScroll>
          <ScrollBtn><Tri d="M0 6L4 2l4 4z" /></ScrollBtn>
          <VThumb />
          <VTrack />
          <ScrollBtn><Tri d="M0 2l4 4 4-4z" /></ScrollBtn>
        </VScroll>
      </SheetArea>

      <TabBar>
        <TabNav>
          <Tri d="M6 0v8L1 4z" color="#c0c0c0" />
          <Tri d="M2 0v8l5-4z" color="#c0c0c0" />
        </TabNav>
        <SheetTab>Sheet1</SheetTab>
        <AddSheet><AddIcon /></AddSheet>
        <SplitDots>
          <Dot />
          <Dot />
          <Dot />
          <Dot />
        </SplitDots>
        <HScroll>
          <ScrollBtn><Tri d="M6 0v8L1 4z" /></ScrollBtn>
          <HThumb />
          <HTrack />
          <ScrollBtn><Tri d="M2 0v8l5-4z" /></ScrollBtn>
        </HScroll>
      </TabBar>

      <StatusBar>
        <Ready>就绪</Ready>
        <StatusText>
          <AccessIcon />
          辅助功能: 不可用
        </StatusText>
        <ViewGroup>
          <ViewBtn $active $w={40}><ViewIconNormal /></ViewBtn>
          <ViewBtn $w={40}><ViewIconPage /></ViewBtn>
          <ViewBtn $w={40}><ViewIconBreak /></ViewBtn>
        </ViewGroup>
        <ZoomBox>
          <svg width="8" height="2" viewBox="0 0 8 2"><path d="M0 1h8" stroke="#555" /></svg>
          <Slider><SliderThumb /></Slider>
          <svg width="8" height="8" viewBox="0 0 8 8"><path d="M0 4h8M4 0v8" stroke="#555" /></svg>
          <ZoomPct>100%</ZoomPct>
        </ZoomBox>
      </StatusBar>
    </Window>
  </>
);

export default App;
